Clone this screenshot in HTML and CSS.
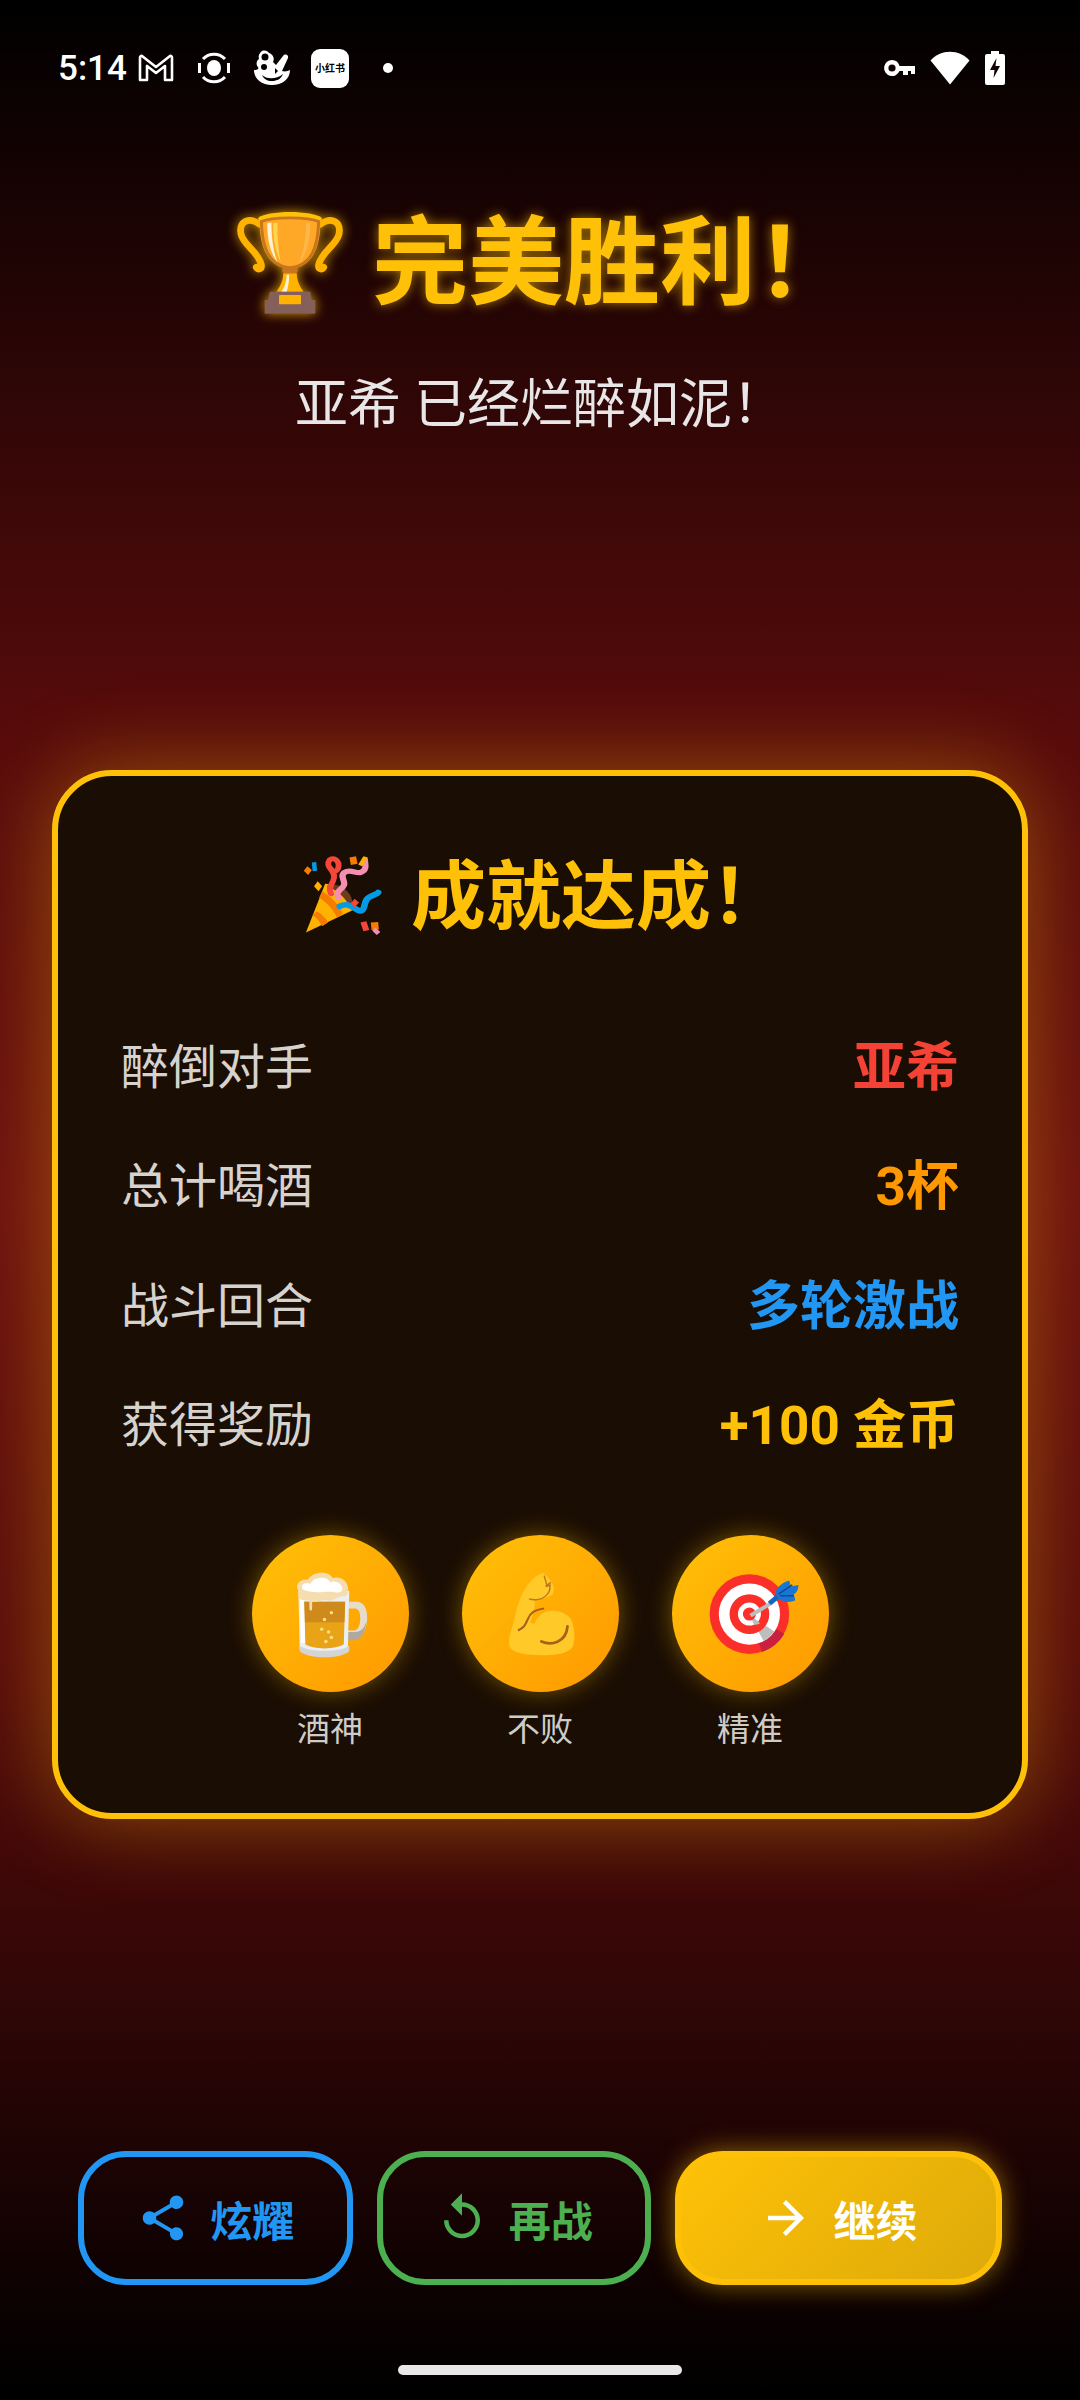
FILE: index.html
```html
<!DOCTYPE html>
<html lang="zh-CN">
<head>
    <meta charset="UTF-8">
    <meta name="viewport" content="width=device-width, initial-scale=1.0">
    <title>完美胜利</title>
    <link rel="stylesheet" href="styles.css">
</head>
<body>
    <div class="status-bar">
        <div class="status-left">
            <span class="clock">5:14</span>
            <svg class="st-gmail" viewBox="0 0 36 28"><path d="M2 26V3.500C2 2.500 3 1.600 4 2l14 11L32 2c1-.4 2 .5 2 1.500V26h-7V12L18 19 9 12v14z" fill="none" stroke="#fff" stroke-width="2.600" stroke-linejoin="round"/></svg>
            <svg class="st-record" viewBox="0 0 34 34"><ellipse cx="17" cy="17" rx="7" ry="8" fill="#fff"/><path d="M6 8a15 15 0 0 1 22 0M28 26a15 15 0 0 1-22 0" fill="none" stroke="#fff" stroke-width="3"/><path d="M2.500 12v10M31.500 12v10" stroke="#fff" stroke-width="3"/></svg>
            <svg class="st-game" viewBox="0 0 40 36"><path d="M2 20c0 9 8 15 18 15s18-6 18-15c-2 1-5 2-8 1L36 8c1-3-3-5-5-2l-7 9-3-3c2-3 0-8-4-9-1-2-4-3-7-2-3 2-4 5-3 8-3 2-3 6-1 8 1 2 0 3-4 3z" fill="#fff"/><circle cx="13" cy="7" r="3.500" fill="#000"/><circle cx="12" cy="17" r="3" fill="#000"/><path d="M10 25c4 4 14 5 21-1-2 5-6 7-11 7s-8-2-10-6z" fill="#000"/><path d="M23 18l3 3-3 3z" fill="#000"/></svg>
            <span class="st-badge">小红书</span>
            <span class="st-dot"></span>
        </div>
        <div class="status-right">
            <svg class="st-key" viewBox="0 0 34 20"><path d="M9 2a8 8 0 1 0 7.500 11H20v4h5v-4h3v3h4V8H16.500A8 8 0 0 0 9 2z" fill="#fff"/><circle cx="9" cy="10" r="3.600" fill="#120204"/></svg>
            <svg class="st-wifi" viewBox="0 0 40 34"><path d="M20 33.500 0.500 9.500C5.500 4 12.500 .8 20 .8s14.500 3.200 19.500 8.700z" fill="#fff"/></svg>
            <svg class="st-battery" viewBox="0 0 20 34"><path d="M6 0h8v3h4a2 2 0 0 1 2 2v27a2 2 0 0 1-2 2H2a2 2 0 0 1-2-2V5a2 2 0 0 1 2-2h4z" fill="#fff"/><path d="M11.500 7 5 19h4.500l-1 8L15 15h-4.500z" fill="#120204"/></svg>
        </div>
    </div>

    <div class="hero">
        <h1 class="hero-title">
            <svg class="trophy" viewBox="0 0 128 128">
                <path d="M28 18C14 8 3 16 6 30c3 13 20 20 24 36 1 5-4 7-6 3" fill="none" stroke="#ffb300" stroke-width="8" stroke-linecap="round"/>
                <path d="M100 18c14-10 25-2 22 12-3 13-20 20-24 36-1 5 4 7 6 3" fill="none" stroke="#ffb300" stroke-width="8" stroke-linecap="round"/>
                <path d="M28 9h72c1 34-8 60-36 62C36 69 27 43 28 9z" fill="#ffa726"/>
                <path d="M26 11C36 1 92 1 102 11l-3 5C88 9 40 9 29 16z" fill="#ffc107"/>
                <path d="M30 15c12-6 56-6 68 0-1 30-8 52-34 55C38 67 31 45 30 15z" fill="none" stroke="#c8761e" stroke-width="3.500"/>
                <path d="M37 17c0 20 4 36 12 46-5-14-7-30-7-47z" fill="#fff3d6"/>
                <path d="M44 17c0 20 3 34 9 46-3-14-4-30-4-47z" fill="#ffd54f"/>
                <path d="M88 17c0 22-5 38-14 48 6-14 9-30 9-48z" fill="#ffb74d"/>
                <path d="M56 76h16c0 8 3 15 8 22H48c5-7 8-14 8-22z" fill="#ffb300"/>
                <path d="M60 78c0 7-2 14-6 20h6c2-6 3-13 3-20z" fill="#fff3d6"/>
                <rect x="55" y="68" width="18" height="8" rx="3" fill="#c8761e"/>
                <path d="M40 98h48l2 12H38z" fill="#85605a"/>
                <rect x="34" y="108" width="60" height="16" fill="#85605a"/>
                <rect x="51" y="102" width="26" height="11" rx="1" fill="#ffb300"/>
            </svg>
            <span>完美胜利！</span>
        </h1>
        <p class="hero-sub">亚希 已经烂醉如泥！</p>
    </div>

    <div class="card">
        <h2 class="card-title">
            <svg class="popper" viewBox="0 0 114 128" preserveAspectRatio="none">
                <path d="M4 124 30 46c16 2 32 20 38 42z" fill="#ffb300"/>
                <path d="M22 68c10 8 20 20 24 32l8-6C50 82 38 66 26 58zM13 96c6 5 10 11 13 18l8-6c-3-7-8-13-15-18z" fill="#f57c00"/>
                <path d="M32 50c12 4 26 18 32 34 3-4 4-12 0-20C58 52 42 42 32 50z" fill="#6d3a1e"/>
                <path d="M38 62C32 50 44 44 42 32 40 22 30 18 36 8c6-6 14 2 12 12-2 8-8 8-10 2" fill="none" stroke="#f4473a" stroke-width="8" stroke-linecap="round"/>
                <path d="M48 68c-6-10 8-14 8-22 0-8-6-12 0-18 8-6 16 2 22 0 10-4 6-14 6-20" fill="none" stroke="#f48fb1" stroke-width="8.500" stroke-linecap="round"/>
                <path d="M50 82c10-6 16 0 24 6 10 6 8-8 12-16 4-8 14-8 16-12" fill="none" stroke="#039be5" stroke-width="9" stroke-linecap="round"/>
                <path d="M12 12l6-1 1 14-6 1z" fill="#039be5"/>
                <path d="M6 26l6 6-5 8-6-7zM63 12l9-2 2 12-9 2zM92 116l10-1 1 12-10 1z" fill="#f57c00" transform="translate(0 -8)"/>
                <path d="M20 42l6 8-5 8-6-8zM82 2l6 2-8 14-5-3z" fill="#ffb300"/>
                <path d="M70 70l6 6-6 8-5-7zM78 108l8-2 4 14-8 2z" fill="#f4473a"/>
                <path d="M98 116l7 7-5 5-6-7z" fill="#f48fb1"/>
            </svg>
            <span>成就达成！</span>
        </h2>

        <div class="stats">
            <div class="stat-row"><span class="stat-label">醉倒对手</span><span class="stat-value red">亚希</span></div>
            <div class="stat-row"><span class="stat-label">总计喝酒</span><span class="stat-value orange">3杯</span></div>
            <div class="stat-row"><span class="stat-label">战斗回合</span><span class="stat-value blue">多轮激战</span></div>
            <div class="stat-row"><span class="stat-label">获得奖励</span><span class="stat-value gold">+100 金币</span></div>
        </div>

        <div class="badges">
            <div class="badge-item">
                <div class="badge-circle">
                    <svg class="badge-emoji" viewBox="0 0 128 128">
                        <path d="M88 46h14c12 0 16 10 16 24s-6 28-18 28H88v-10h10c8 0 10-10 10-18s-2-14-8-14H88z" fill="#e6dccb"/>
                        <path d="M88 90h12c10 0 14-6 17-16-1 14-7 28-18 28H88z" fill="#b0a9a0"/>
                        <path d="M18 30h74l-2 86c-14 12-56 12-70 0z" fill="#eceff1"/>
                        <path d="M26 46h60l-2 62c-12 8-44 8-56 0z" fill="#e8a317"/>
                        <path d="M26 46h60l-1 30H27z" fill="#cf8a1c"/>
                        <path d="M20 34h6l2 72h-6z" fill="#fff"/>
                        <path d="M20 110c14 10 58 10 72 0v8c-14 12-58 12-72 0z" fill="#d4d4d4"/>
                        <circle cx="66" cy="62" r="2.500" fill="#ffe082"/><circle cx="56" cy="72" r="2.500" fill="#ffe082"/><circle cx="52" cy="86" r="2.500" fill="#ffe082"/><circle cx="62" cy="90" r="2.500" fill="#ffe082"/><circle cx="66" cy="98" r="2.500" fill="#ffe082"/><circle cx="58" cy="104" r="2.500" fill="#ffe082"/>
                        <path d="M18 30C12 20 22 12 32 14 38 2 62 0 68 12c10-4 24 4 22 18 0 6-2 8-6 8-10 0-14 8-24 6-8-2-14 4-22 2v10c0 4-4 4-4 0V44c-6 0-10 0-14-2-2-4-2-8-2-12z" fill="#f6ddb0"/>
                        <path d="M24 28c-4-8 6-10 12-8 4-10 24-12 28-2 8-4 18 2 18 10 0 4-6 6-12 4-12-2-30 4-46-4z" fill="#fff"/>
                    </svg>
                </div>
                <span class="badge-label">酒神</span>
            </div>
            <div class="badge-item">
                <div class="badge-circle">
                    <svg class="badge-emoji" viewBox="0 0 128 128">
                        <path d="M68 4c-24 10-34 36-40 62-4 18-12 36-8 46 4 8 22 12 46 12 24 0 42-4 46-14 4-12 2-34-6-42-12-10-28-12-40-4-4 4-8 8-10 14-2 0-4 0-6-2 4-12 8-24 6-34 8 2 18-2 26-6 4-8 2-16-4-22-2-4-6-8-10-10z" fill="#ffca28"/>
                        <path d="M48 42c6 2 18 2 24-4 4-4 8-8 6-16-2 0-4 0-6 1M70 8l4 14 6-4M72 24l8-2" fill="none" stroke="#c0761f" stroke-width="2"/>
                        <path d="M32 88c8-4 10-6 14-16 4-10 10-14 24-16" fill="none" stroke="#a8601c" stroke-width="3"/>
                        <path d="M66 104c14 6 36 2 38-22" fill="none" stroke="#a8601c" stroke-width="4" stroke-linecap="round"/>
                    </svg>
                </div>
                <span class="badge-label">不败</span>
            </div>
            <div class="badge-item">
                <div class="badge-circle">
                    <svg class="badge-emoji target" viewBox="0 0 128 128">
                        <circle cx="58" cy="68" r="52" fill="#fb2f2a"/>
                        <path d="M58 68 96 104A52 52 0 0 1 62 120z" fill="#c8203e" transform="rotate(-14 58 68)"/>
                        <circle cx="58" cy="68" r="40" fill="#fff"/>
                        <path d="M58 68 86 96A40 40 0 0 1 70 106z" fill="#bdbdbd" transform="rotate(-10 58 68)"/>
                        <circle cx="58" cy="68" r="26" fill="#fb2f2a"/>
                        <circle cx="58" cy="68" r="15" fill="#fff"/>
                        <path d="M58 68 72 80A15 15 0 0 1 64 82z" fill="#bdbdbd"/>
                        <circle cx="58" cy="68" r="8.500" fill="#fb2f2a"/>
                        <path d="M58 68 88 50l3 4-30 18z" fill="#bdbdbd"/>
                        <path d="M82 52 96 40l4 6-14 10z" fill="#1565c0"/>
                        <path d="M92 40c2-8 10-14 18-16l2 8 10-2c0 6-2 10-6 12l2 8c-8 4-16 2-22-2z" fill="#1976d2"/>
                        <path d="M96 42 114 30M98 44l18 0" stroke="#0d47a1" stroke-width="2"/>
                    </svg>
                </div>
                <span class="badge-label">精准</span>
            </div>
        </div>
    </div>

    <div class="actions">
        <button class="btn btn-share">
            <svg class="btn-icon" viewBox="0 0 24 24"><path fill="currentColor" d="M18 16.080c-.76 0-1.440.3-1.960.77L8.910 12.700c.05-.23.09-.46.09-.7s-.04-.47-.09-.7l7.050-4.110c.54.5 1.250.81 2.040.81 1.660 0 3-1.340 3-3s-1.340-3-3-3-3 1.340-3 3c0 .24.04.47.09.7L8.040 9.810C7.500 9.310 6.790 9 6 9c-1.660 0-3 1.340-3 3s1.340 3 3 3c.79 0 1.500-.31 2.040-.81l7.120 4.160c-.05.21-.08.43-.08.65 0 1.610 1.310 2.920 2.920 2.920s2.920-1.310 2.920-2.920-1.310-2.920-2.920-2.920z"/></svg>
            <span>炫耀</span>
        </button>
        <button class="btn btn-retry">
            <svg class="btn-icon" viewBox="0 0 24 24"><path fill="currentColor" d="M12 5V1L7 6l5 5V7c3.310 0 6 2.690 6 6s-2.690 6-6 6-6-2.690-6-6H4c0 4.420 3.580 8 8 8s8-3.580 8-8-3.580-8-8-8z"/></svg>
            <span>再战</span>
        </button>
        <button class="btn btn-next">
            <svg class="btn-icon" viewBox="0 0 24 24"><path fill="currentColor" d="M12 4l-1.410 1.410L16.170 11H4v2h12.170l-5.580 5.590L12 20l8-8z"/></svg>
            <span>继续</span>
        </button>
    </div>

    <div class="home-bar"></div>
</body>
</html>
```

FILE: styles.css
```css
* {
    box-sizing: border-box;
}
html, body {
    margin: 0;
    padding: 0;
}
body {
    width: 1080px;
    height: 2400px;
    overflow: hidden;
    display: flex;
    flex-direction: column;
    background: linear-gradient(180deg, #000 0%, #560b0b 30%, #6b1010 50%, #560b0b 70%, #000 100%);
    font-family: Roboto, "Noto Sans CJK SC", sans-serif;
    color: #fff;
}

/* status bar */
.status-bar {
    height: 136px;
    padding: 48px 75px 0 58px;
    display: flex;
    justify-content: space-between;
    align-items: flex-start;
}
.status-left, .status-right {
    display: flex;
    align-items: center;
    height: 40px;
}
.clock {
    font-size: 35px;
    font-weight: 500;
    width: 80px;
}
.st-gmail { width: 36px; height: 28px; margin-right: 23px; }
.st-record { width: 34px; height: 34px; margin-right: 21px; }
.st-game { width: 40px; height: 36px; margin-right: 19px; }
.st-badge {
    width: 38px;
    height: 39px;
    border-radius: 9px;
    background: #fff;
    color: #000;
    font-size: 10px;
    font-weight: 700;
    line-height: 39px;
    text-align: center;
    white-space: nowrap;
    overflow: hidden;
}
.st-dot {
    width: 10px;
    height: 10px;
    border-radius: 50%;
    background: #fff;
    margin-left: 34px;
}
.st-key { width: 34px; height: 20px; margin-right: 13px; }
.st-wifi { width: 40px; height: 34px; margin-right: 15px; }
.st-battery { width: 20px; height: 34px; }

/* heading */
.hero {
    height: 634px;
    text-align: center;
}
.hero-title {
    margin: 61px 0 0;
    height: 132px;
    display: flex;
    justify-content: center;
    align-items: center;
    gap: 28px;
    font-size: 96px;
    font-weight: 700;
    line-height: 132px;
    color: #ffc107;
    text-shadow: 0 0 12px rgba(255, 193, 7, 0.6);
}
.trophy {
    width: 108px;
    height: 108px;
    margin-left: 8px;
    filter: drop-shadow(0 0 6px rgba(255, 193, 7, 0.8));
}
.hero-sub {
    margin: 38px 0 0;
    font-size: 53px;
    line-height: 76px;
    color: #e8e6e6;
}

/* card */
.card {
    width: 976px;
    height: 1049px;
    margin: 0 0 0 52px;
    padding: 64px 63px 0;
    border: 6px solid #ffc107;
    border-radius: 60px;
    background: #1a0d03;
    box-shadow: 0 0 84px rgba(255, 193, 7, 0.38);
}
.card-title {
    margin: 0;
    height: 100px;
    display: flex;
    justify-content: center;
    align-items: center;
    gap: 24px;
    font-size: 75px;
    font-weight: 700;
    color: #ffc107;
}
.popper {
    width: 84px;
    height: 80px;
    margin: 10px 0 0 9px;
}
.stats {
    margin-top: 63px;
}
.stat-row {
    height: 119.5px;
    display: flex;
    justify-content: space-between;
    align-items: center;
}
.stat-label {
    font-size: 48px;
    color: #d6d2ce;
}
.stat-value {
    font-size: 53px;
    font-weight: 700;
}
.red { color: #f44336; }
.orange { color: #ff9800; }
.blue { color: #2196f3; }
.gold { color: #ffc107; }

.badges {
    margin-top: 54px;
    display: flex;
    justify-content: center;
    gap: 53px;
}
.badge-item {
    width: 157px;
    display: flex;
    flex-direction: column;
    align-items: center;
}
.badge-circle {
    width: 157px;
    height: 157px;
    border-radius: 50%;
    background: linear-gradient(135deg, #ffc107, #ff9800);
    box-shadow: 0 0 24px rgba(255, 193, 7, 0.4);
    display: flex;
    justify-content: center;
    align-items: center;
}
.badge-emoji {
    width: 88px;
    height: 88px;
}
.badge-emoji.target {
    width: 98px;
    height: 98px;
    margin: 0 0 6px 8px;
}
.badge-label {
    margin-top: 12px;
    font-size: 33px;
    line-height: 52px;
    color: #cfccc8;
}

/* bottom buttons */
.actions {
    margin: 332px 78px 0;
    display: flex;
    gap: 24px;
}
.btn {
    flex: 1;
    height: 134px;
    border-radius: 48px;
    border: 6px solid;
    background: transparent;
    display: flex;
    justify-content: center;
    align-items: center;
    gap: 20px;
    padding: 0;
    font-family: inherit;
    font-size: 42px;
    font-weight: 700;
}
.btn-icon {
    width: 54px;
    height: 54px;
}
.btn-share { color: #2196f3; border-color: #2196f3; }
.btn-retry { color: #4caf50; border-color: #4caf50; }
.btn-next {
    flex: 1.2;
    color: #fff;
    border-color: #ffc107;
    background: linear-gradient(135deg, #ffc107, #ddaa0a);
    box-shadow: 0 0 26px rgba(255, 193, 7, 0.5);
}

.home-bar {
    width: 284px;
    height: 10px;
    margin: 80px auto 0;
    border-radius: 5px;
    background: #e8e8e8;
}
```
